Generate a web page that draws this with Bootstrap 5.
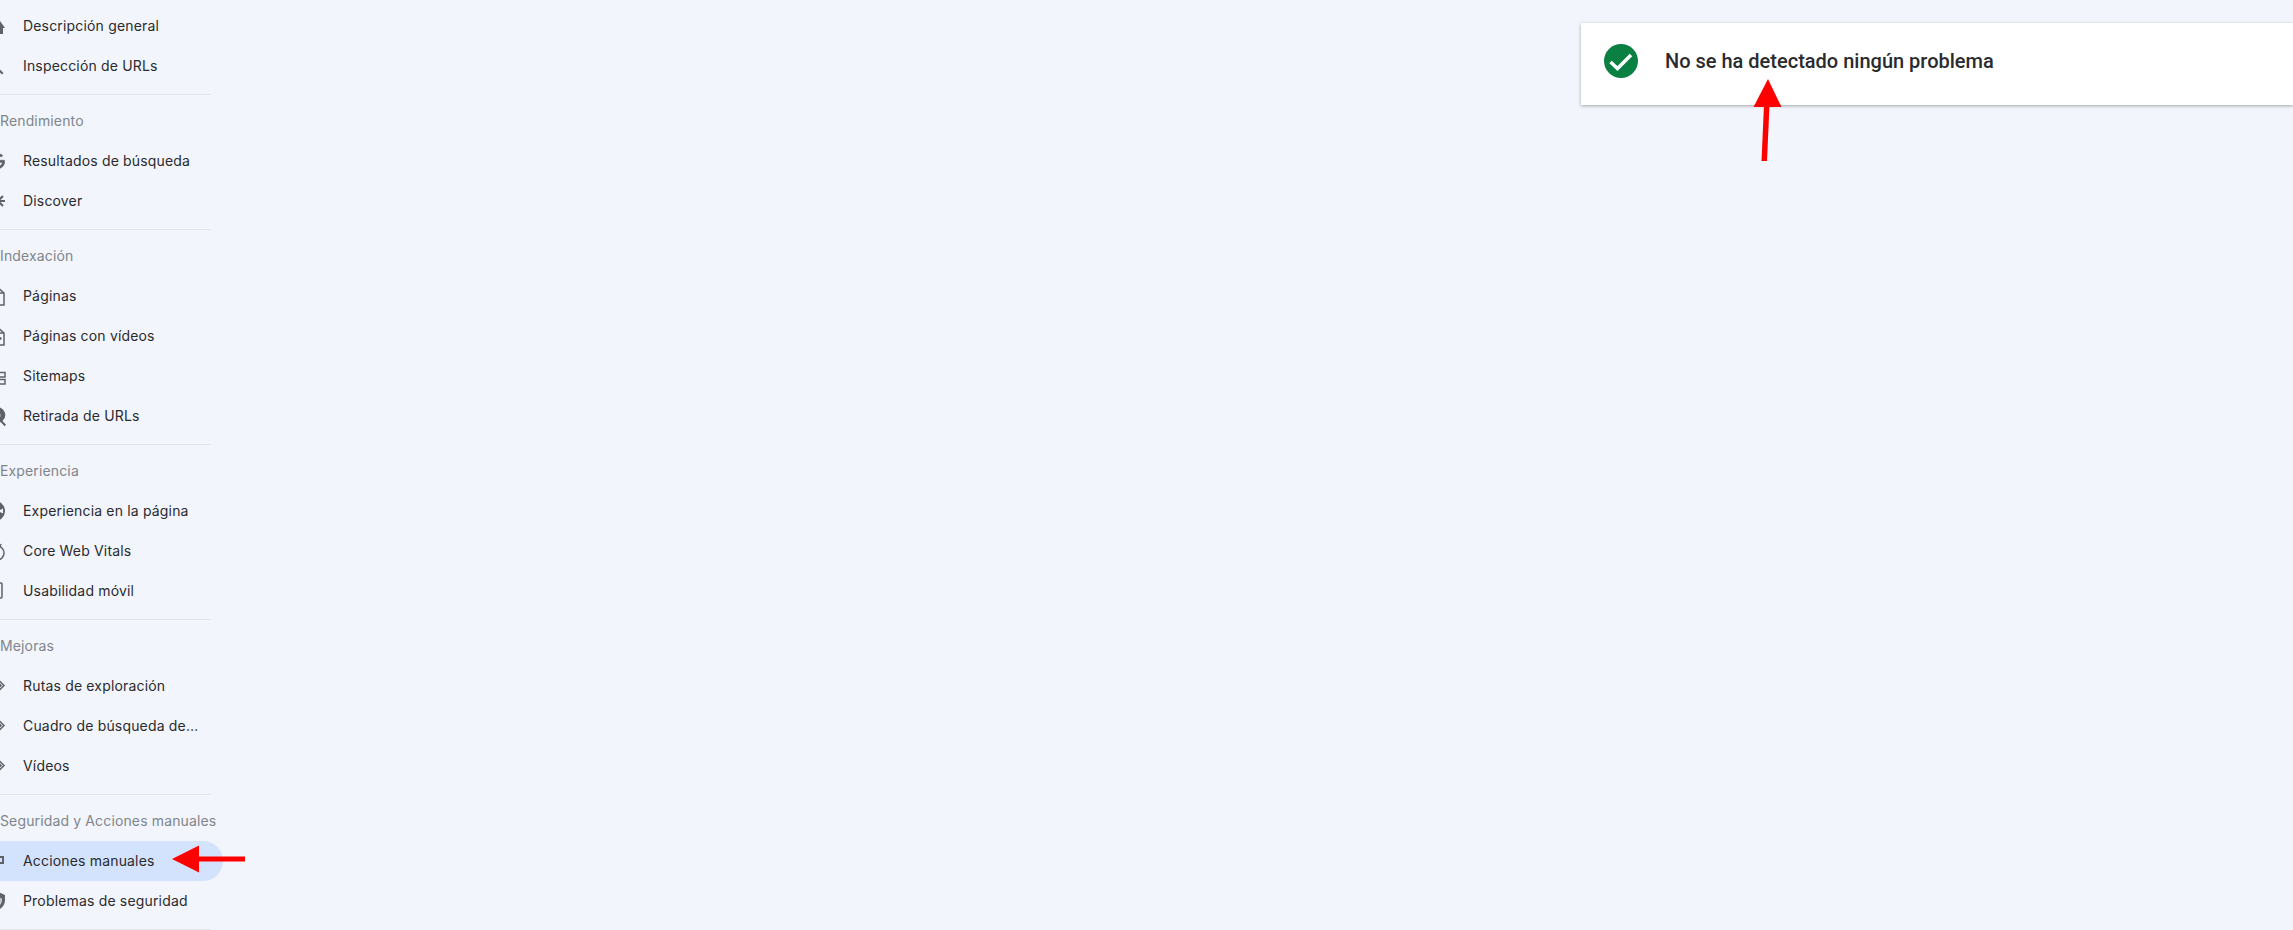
<!DOCTYPE html>
<html lang="es">
<head>
    <meta charset="UTF-8">
    <title>Acciones manuales</title>
    <link href="https://cdn.jsdelivr.net/npm/bootstrap@5.3.3/dist/css/bootstrap.min.css" rel="stylesheet">
    <style>
        html, body {
            height: 100%;
        }
        body {
            background-color: #f2f5fc;
            color: #2a2b2e;
            font-family: "Inter", "Liberation Sans", sans-serif;
            overflow: hidden;
        }
        .side-panel {
            width: 211px;
            padding-top: 6px;
        }
        .side-group {
            border-bottom: 1px solid #e3e5ea;
            padding-bottom: 8px;
        }
        .side-head {
            height: 40px;
            margin-top: 6px;
            line-height: 40px;
            font-size: 14px;
            letter-spacing: .14px;
            color: #80868b;
            white-space: nowrap;
        }
        .side-row {
            height: 40px;
            font-size: 14px;
            letter-spacing: .17px;
            white-space: nowrap;
        }
        .side-label {
            margin-bottom: 2px;
        }
        .side-row svg {
            flex: none;
            width: 24px;
            height: 24px;
            margin-left: -17px;
            margin-right: 16px;
            fill: #5f6368;
        }
        .side-row svg .ln {
            fill: none;
            stroke: #5f6368;
            stroke-width: 1.5;
        }
        .side-row svg .ln-thick {
            stroke-width: 2;
        }
        .side-active {
            background-color: #d3e3fd;
            margin-right: -12px;
            border-radius: 0 20px 20px 0;
        }
        .result-wrap {
            padding-top: 23px;
            padding-left: 1370px;
        }
        .result-box {
            height: 82px;
            padding-left: 23px;
            padding-bottom: 6px;
            border-radius: 0;
            box-shadow: 0 1px 3px rgba(60, 64, 67, .45);
        }
        .result-text {
            margin-left: 27px;
            font-family: "Roboto", "Liberation Sans", sans-serif;
            font-size: 20px;
            font-weight: 500;
            color: #2a2b2e;
        }
        .mark-layer {
            position: absolute;
            top: 0;
            left: 0;
            pointer-events: none;
        }
    </style>
</head>
<body>
    <div class="d-flex">
        <!-- Sidebar -->
        <nav class="side-panel flex-shrink-0">
            <div class="side-group">
                <div class="side-row d-flex align-items-center">
                    <svg viewBox="0 0 24 24"><path d="M17 7l-6 7h2v6h7v-6h2z"/></svg><span class="side-label">Descripción general</span>
                </div>
                <div class="side-row d-flex align-items-center">
                    <svg viewBox="0 0 24 24"><path d="M15.5 14h-.79l-.28-.27A6.47 6.47 0 0 0 16 9.5 6.5 6.5 0 1 0 9.5 16c1.61 0 3.09-.59 4.23-1.57l.27.28v.79l5 4.99L20.49 19l-4.99-5zm-6 0C7.01 14 5 11.99 5 9.5S7.01 5 9.5 5 14 7.01 14 9.5 11.99 14 9.5 14z"/></svg><span class="side-label">Inspección de URLs</span>
                </div>
            </div>
            <div class="side-group">
                <div class="side-head">Rendimiento</div>
                <div class="side-row d-flex align-items-center">
                    <svg viewBox="0 0 24 24"><path transform="translate(5.4 3) scale(.75)" stroke="#5f6368" stroke-width="1" d="M21.35 11.1h-9.17v2.73h6.51c-.33 3.81-3.5 5.44-6.5 5.44C8.36 19.27 5 16 5 12c0-3.9 3.2-7.27 7.2-7.27 3.09 0 4.9 1.97 4.9 1.97L19 4.72S16.56 2 12.1 2C6.42 2 2.03 6.8 2.03 12c0 5.05 4.13 10 10.22 10 5.35 0 9.25-3.67 9.25-9.09 0-1.15-.15-1.81-.15-1.81z"/></svg><span class="side-label">Resultados de búsqueda</span>
                </div>
                <div class="side-row d-flex align-items-center">
                    <svg viewBox="0 0 24 24"><path class="ln ln-thick" d="M15 5v14M8 12h14M10 7l10 10M20 7 10 17"/></svg><span class="side-label">Discover</span>
                </div>
            </div>
            <div class="side-group">
                <div class="side-head">Indexación</div>
                <div class="side-row d-flex align-items-center">
                    <svg viewBox="0 0 24 24"><path class="ln" d="M14 3H8v18h13V9zM14 3v6h7"/></svg><span class="side-label">Páginas</span>
                </div>
                <div class="side-row d-flex align-items-center">
                    <svg viewBox="0 0 24 24"><path class="ln" d="M14 3H8v18h13V9zM14 3v6h7"/><path d="M16 12v5l3-2.500z"/></svg><span class="side-label">Páginas con vídeos</span>
                </div>
                <div class="side-row d-flex align-items-center">
                    <svg viewBox="0 0 24 24"><path class="ln" d="M10 8.500h12V13H10zM10 15.500h12V20H10z"/></svg><span class="side-label">Sitemaps</span>
                </div>
                <div class="side-row d-flex align-items-center">
                    <svg viewBox="0 0 24 24"><path fill-rule="evenodd" d="M14 3a8 8 0 1 0 3.600 15.100l4 4.100 1.400-1.400-3.500-3.800A8 8 0 0 0 14 3zm0 5a3.400 3.400 0 1 1 0 6.800A3.400 3.400 0 0 1 14 8z"/></svg><span class="side-label">Retirada de URLs</span>
                </div>
            </div>
            <div class="side-group">
                <div class="side-head">Experiencia</div>
                <div class="side-row d-flex align-items-center">
                    <svg viewBox="0 0 24 24"><path fill-rule="evenodd" d="M12 2a10 10 0 1 0 0 20 10 10 0 0 0 0-20zM20 9.500v5l-5-2.500z"/></svg><span class="side-label">Experiencia en la página</span>
                </div>
                <div class="side-row d-flex align-items-center">
                    <svg viewBox="0 0 24 24"><circle class="ln" cx="14" cy="14" r="7"/><path class="ln" d="M14 14l4-9"/></svg><span class="side-label">Core Web Vitals</span>
                </div>
                <div class="side-row d-flex align-items-center">
                    <svg viewBox="0 0 24 24"><rect class="ln" x="6" y="4" width="13" height="15" rx="1"/></svg><span class="side-label">Usabilidad móvil</span>
                </div>
            </div>
            <div class="side-group">
                <div class="side-head">Mejoras</div>
                <div class="side-row d-flex align-items-center">
                    <svg viewBox="0 0 24 24"><path class="ln" d="M16 6.500l5 5-5 5M16 9.500l2 2-2 2"/></svg><span class="side-label">Rutas de exploración</span>
                </div>
                <div class="side-row d-flex align-items-center">
                    <svg viewBox="0 0 24 24"><path class="ln" d="M16 6.500l5 5-5 5M16 9.500l2 2-2 2"/></svg><span class="side-label text-truncate">Cuadro de búsqueda de…</span>
                </div>
                <div class="side-row d-flex align-items-center">
                    <svg viewBox="0 0 24 24"><path class="ln" d="M16 6.500l5 5-5 5M16 9.500l2 2-2 2"/></svg><span class="side-label">Vídeos</span>
                </div>
            </div>
            <div class="side-group">
                <div class="side-head">Seguridad y Acciones manuales</div>
                <div class="side-row side-active d-flex align-items-center">
                    <svg viewBox="0 0 24 24"><path class="ln ln-thick" d="M12 8h8v6h-8z"/></svg><span class="side-label">Acciones manuales</span>
                </div>
                <div class="side-row d-flex align-items-center">
                    <svg viewBox="0 0 24 24"><path d="M15 3 8 6v5c0 4.500 2.900 8.500 7 10 4.100-1.500 7-5.500 7-10V6z"/><path fill="#c4c7cc" d="M15 8l4 1.500V11c0 2.800-1.600 5.300-4 6.500z"/></svg><span class="side-label">Problemas de seguridad</span>
                </div>
            </div>
        </nav>

        <!-- Result -->
        <main class="result-wrap flex-grow-1">
            <div class="result-box card border-0 flex-row align-items-center">
                <svg width="34" height="34" viewBox="0 0 34 34">
                    <circle cx="17" cy="17" r="17" fill="#0b8043"/>
                    <path d="M6.500 18l7 6.500L27 11" fill="none" stroke="#fff" stroke-width="3.500"/>
                </svg>
                <span class="result-text">No se ha detectado ningún problema</span>
            </div>
        </main>
    </div>

    <!-- Red annotation arrows -->
    <svg class="mark-layer" width="2293" height="930" viewBox="0 0 2293 930">
        <path d="M1761.500 161l2.500-56h5.500l-2.500 56z" fill="#f00"/>
        <path d="M1768 79l13.500 28h-28z" fill="#f00"/>
        <path d="M199 856.500h46v5h-46z" fill="#f00"/>
        <path d="M172 859l27-13.500v27z" fill="#f00"/>
    </svg>

    <script src="https://cdn.jsdelivr.net/npm/bootstrap@5.3.3/dist/js/bootstrap.bundle.min.js"></script>
</body>
</html>
